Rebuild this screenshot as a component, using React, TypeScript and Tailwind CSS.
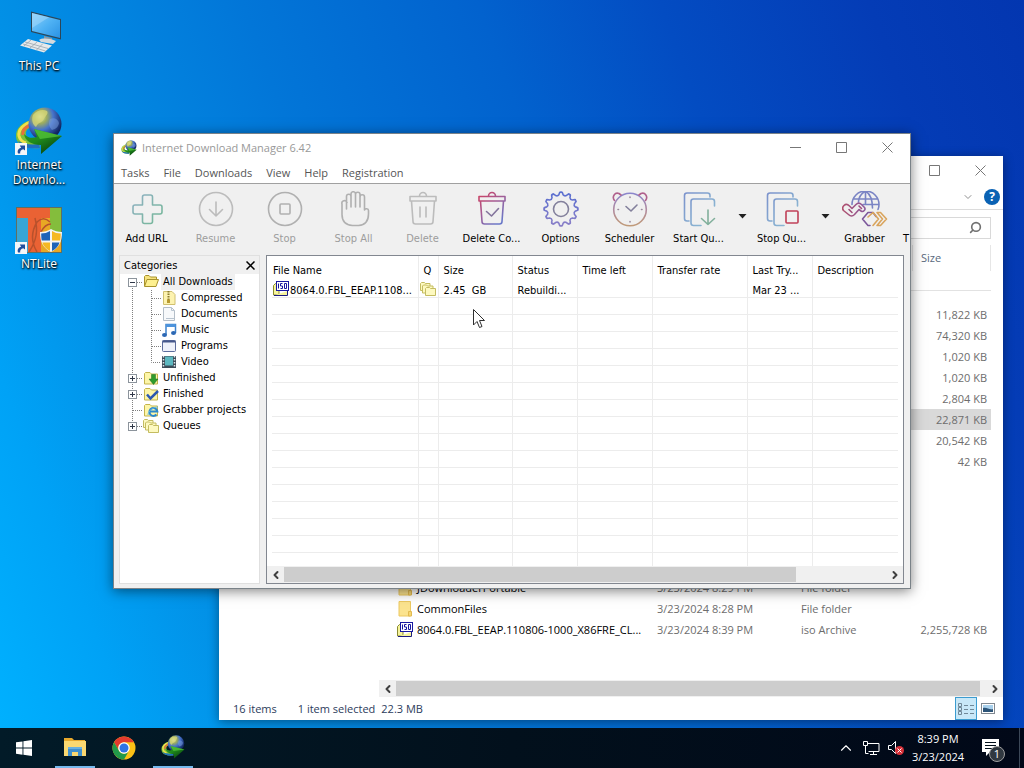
import type { ReactNode } from 'react';
import { ChevronDown, ChevronLeft, ChevronRight, ChevronUp, Search } from 'lucide-react';

type ToolItem = { label: string; icon: ReactNode; disabled?: boolean; menu?: boolean };
type TreeItem = { label: string; icon: ReactNode; child?: boolean; last?: boolean; toggle?: 'plus' | 'minus'; first?: boolean };
type FileRow = { name?: string; icon?: ReactNode; date?: string; type?: string; size?: string; selected?: boolean };

/* ---------- logos ---------- */

function SharedGradients() {
  return (
    <svg className="absolute h-0 w-0" aria-hidden="true">
      <defs>
        <radialGradient id="globe" cx="0.35" cy="0.28" r="0.8">
          <stop offset="0" stopColor="#e3ecc0" />
          <stop offset="0.25" stopColor="#9fae5c" />
          <stop offset="0.5" stopColor="#4673cc" />
          <stop offset="0.85" stopColor="#152b68" />
          <stop offset="1" stopColor="#0c1a48" />
        </radialGradient>
        <linearGradient id="arrow" x1="0" y1="0" x2="0.8" y2="1">
          <stop offset="0" stopColor="#2f9a22" />
          <stop offset="0.45" stopColor="#1f8a1c" />
          <stop offset="1" stopColor="#063a0c" />
        </linearGradient>
        <linearGradient id="plus" x1="0" y1="0" x2="1" y2="1">
          <stop offset="0" stopColor="#8fb0c4" />
          <stop offset="1" stopColor="#74b896" />
        </linearGradient>
        <linearGradient id="bin" x1="0" y1="0" x2="0.7" y2="1">
          <stop offset="0" stopColor="#cf4060" />
          <stop offset="0.45" stopColor="#a85a90" />
          <stop offset="1" stopColor="#6a78c8" />
        </linearGradient>
        <linearGradient id="gear" x1="0" y1="0" x2="0" y2="1">
          <stop offset="0" stopColor="#5a6fd0" />
          <stop offset="1" stopColor="#8b80c8" />
        </linearGradient>
        <linearGradient id="clock" x1="0" y1="0" x2="0" y2="1">
          <stop offset="0" stopColor="#8a86cc" />
          <stop offset="0.5" stopColor="#b08aa0" />
          <stop offset="1" stopColor="#c09a78" />
        </linearGradient>
        <linearGradient id="pages" x1="0" y1="0" x2="1" y2="1">
          <stop offset="0" stopColor="#7b92cc" />
          <stop offset="1" stopColor="#8fc0d4" />
        </linearGradient>
        <linearGradient id="links" x1="0" y1="0" x2="1" y2="0">
          <stop offset="0" stopColor="#b0506e" />
          <stop offset="1" stopColor="#8c5a9c" />
        </linearGradient>
        <linearGradient id="screen" x1="0" y1="0" x2="1" y2="1">
          <stop offset="0" stopColor="#8fd0fa" />
          <stop offset="0.5" stopColor="#4fb2f4" />
          <stop offset="1" stopColor="#2a92e4" />
        </linearGradient>
      </defs>
    </svg>
  );
}

function IdmLogo({ className }: { className: string }) {
  return (
    <svg viewBox="0 0 48 48" className={className} aria-hidden="true">
      <path d="M20 12C8 14 0 21 1 30c1 9 10 12 24 11l-2-9c-8 1-11-1-12-4-1-5 3-8 9-9z" fill="#7cc03a" />
      <path d="M19 14C8 17 3 23 4 29c1 4 4 6 7 7" fill="none" stroke="#f0e04c" strokeWidth="3" />
      <path d="M19 17C11 19 7 23 8 28" fill="none" stroke="#e8703a" strokeWidth="3" />
      <path d="M3 34c4 7 12 8 22 7l-1-4c-9 1-16 0-21-3z" fill="#1f6fc0" />
      <circle cx="30" cy="17" r="16.5" fill="url(#globe)" />
      <path d="M18 8c4-5 10-6 14-4 2 3-2 5-3 8-2 4-6 3-8 8-3-2-5-7-3-12z" fill="#d8d878" opacity="0.75" />
      <path d="M35 12c4-2 8 0 9 4-1 5-4 6-7 7-3-3-4-7-2-11z" fill="#7aa0e0" opacity="0.5" />
      <path d="M19 22l28 7-21 18 0-9C17 38 10 34 9 27c5 5 9 4 13 3z" fill="url(#arrow)" />
      <path d="M19 22l28 7-22 3z" fill="#58c83c" opacity="0.7" />
    </svg>
  );
}

function ShortcutArrow() {
  return (
    <svg viewBox="0 0 12 12" className="absolute bottom-0 left-0 h-3 w-3" aria-hidden="true">
      <rect width="12" height="12" fill="#f4f6f8" />
      <path d="M3 10.500C2 7.500 3.500 5.200 6.200 4.800L4.800 2.500H10v5L8.300 6.300C6 6.800 4.800 8.300 5.200 10.500z" fill="#1f4f9e" />
    </svg>
  );
}

function ThisPcIcon() {
  return (
    <svg viewBox="0 0 48 48" className="h-12 w-12" aria-hidden="true">
      <path d="M16 3.500l30 7.500v20.500l-30-7.500z" fill="#2c4658" />
      <path d="M17 5l28 7v18l-28-7z" fill="url(#screen)" />
      <path d="M17 5l17 4.300L17 20z" fill="#a8dcfb" opacity="0.5" />
      <path d="M29 28l8 2v4l-8-2z" fill="#8d9aa4" />
      <path d="M24 32c3-2 9-2 17 1l-3 3-12-2z" fill="#d4dade" />
      <path d="M13 31l24 6.500-8 7L5 37.500z" fill="#e6eaec" />
      <path d="M10 34l23 6.500M8 36l22.500 7M16 32l-7 6M22 34l-7 6M28 35.500l-7 7" stroke="#9aa6ae" strokeWidth="0.8" />
    </svg>
  );
}

function NtLiteIcon() {
  return (
    <svg viewBox="0 0 48 48" className="h-12 w-12" aria-hidden="true">
      <rect x="1" y="1" width="46" height="46" fill="#5f6f62" />
      <rect x="2" y="2" width="44" height="44" fill="#e8a824" />
      <rect x="2" y="12" width="12" height="34" fill="#38a5d4" />
      <rect x="35" y="2" width="11" height="26" fill="#84bd3c" />
      <path d="M2 2h33v10H26v34H13V12H2z" fill="#ea6234" />
      <path d="M14 46c8-12 9-22 6-34M22 46c-6-10-6-20 0-30 5-5 9-4 13 0M26 26c3-6 6-8 10-8" fill="none" stroke="#b8512c" strokeWidth="1.500" />
      <path d="M36 23c3 2 7 3 11 3 0 10-3 16-11 20-8-4-11-10-11-20 4 0 8-1 11-3z" fill="#f4f4f4" />
      <path d="M35 25v9.500h-8.300c-.3-2-.5-4-.5-7 3 0 6.300-.8 8.800-2.500zM37 36.500h7.500c-1 4-4 6.500-7.500 8.500z" fill="#1d63b8" />
      <path d="M37 25c2.500 1.700 5.500 2.500 8.800 2.500 0 2.500-.2 5-.6 7H37zM27.300 36.500H35v8.500c-3.500-2-6.500-4.500-7.700-8.500z" fill="#f5b822" />
    </svg>
  );
}

function ChromeIcon() {
  return (
    <svg viewBox="0 0 48 48" className="h-6 w-6" aria-hidden="true">
      <circle cx="24" cy="24" r="23" fill="#fbc116" />
      <path d="M4.100 12.500A23 23 0 0 1 43.900 12.500H24A11.500 11.500 0 0 0 14 29.800z" fill="#e33b2e" />
      <path d="M4.100 12.500A23 23 0 0 0 24 47l10-17.300A11.500 11.500 0 0 1 14 29.700z" fill="#21994a" />
      <circle cx="24" cy="24" r="11.500" fill="#fff" />
      <circle cx="24" cy="24" r="9" fill="#2f74e4" />
    </svg>
  );
}

function ExplorerIcon() {
  return (
    <svg viewBox="0 0 24 24" className="h-6 w-6" aria-hidden="true">
      <path d="M1 3h8l2 2h11v15H1z" fill="#e8a92c" />
      <path d="M1 6h22v15H1z" fill="#fbd870" />
      <path d="M5 13h14v8h-4v-4H9v4H5z" fill="#3f8fce" />
      <path d="M5 12h14v2H5z" fill="#68b0e0" />
    </svg>
  );
}

/* ---------- toolbar drawings ---------- */

function ToolSvg({ children, wide }: { children: ReactNode; wide?: boolean }) {
  return (
    <svg
      viewBox={wide ? '0 0 46 36' : '0 0 36 36'}
      className={wide ? 'h-9 w-[46px]' : 'h-9 w-9'}
      fill="none"
      strokeWidth="1.6"
      strokeLinecap="round"
      strokeLinejoin="round"
      aria-hidden="true"
    >
      {children}
    </svg>
  );
}

function gearPath(teeth: number) {
  const pts: string[] = [];
  const step = (Math.PI * 2) / teeth;
  const at = (r: number, a: number) => `${(18 + r * Math.sin(a)).toFixed(2)} ${(18 - r * Math.cos(a)).toFixed(2)}`;
  for (let i = 0; i < teeth; i++) {
    const a = i * step;
    if (i === 0) pts.push(`M${at(14.4, a - step * 0.28)}`);
    pts.push(`Q${at(18.2, a - step * 0.12)} ${at(16.6, a)}`);
    pts.push(`Q${at(18.2, a + step * 0.12)} ${at(14.4, a + step * 0.28)}`);
    pts.push(`Q${at(13, a + step * 0.5)} ${at(14.4, a + step * 0.72)}`);
  }
  return pts.join('') + 'Z';
}

const binShape = 'M5 5.500h26v4.500H5zM6.500 10l1.500 20.500a2.500 2.500 0 0 0 2.500 2.500h15a2.500 2.500 0 0 0 2.500-2.500L29.500 10M14.500 5a3.500 3.500 0 0 1 7 0';
const pagesShape = 'M8 30H6a2.500 2.500 0 0 1-2.500-2.500V4.500A2.500 2.500 0 0 1 6 2h20.500A2.500 2.500 0 0 1 29 4.500V6M20 34.500h-7.500A2.500 2.500 0 0 1 10 32V10.500A2.500 2.500 0 0 1 12.500 8h18.500a2.500 2.500 0 0 1 2.500 2.500V15';

const tools: ToolItem[] = [
  {
    label: 'Add URL',
    icon: (
      <ToolSvg>
        <path d="M15.500 4h6a2 2 0 0 1 2 2v8h7.500a2 2 0 0 1 2 2v5a2 2 0 0 1-2 2h-7.500v7.500a2 2 0 0 1-2 2h-6a2 2 0 0 1-2-2V23H6a2 2 0 0 1-2-2v-5a2 2 0 0 1 2-2h7.500V6a2 2 0 0 1 2-2z" stroke="url(#plus)" />
      </ToolSvg>
    ),
  },
  {
    label: 'Resume',
    disabled: true,
    icon: (
      <ToolSvg>
        <circle cx="18" cy="18" r="16.500" stroke="#bcbcbc" />
        <path d="M18 11v14M11.500 18.500L18 25l6.500-6.500" stroke="#bcbcbc" />
      </ToolSvg>
    ),
  },
  {
    label: 'Stop',
    disabled: true,
    icon: (
      <ToolSvg>
        <circle cx="18" cy="18" r="16.500" stroke="#b0b0b0" />
        <rect x="13" y="13" width="10" height="10" rx="1" stroke="#b0b0b0" />
      </ToolSvg>
    ),
  },
  {
    label: 'Stop All',
    disabled: true,
    icon: (
      <ToolSvg>
        <path
          d="M10.500 18V5.500a2.200 2.200 0 0 1 4.500 0V16M15 8V3a2.200 2.200 0 0 1 4.500 0v13M19.500 8V3.500a2.200 2.200 0 0 1 4.500 0V16M24 8V6a2.200 2.200 0 0 1 4.500 0v13c.5-2 4-1.500 4 .5V23c0 7-4 11-10 11.500h-6c-6-.5-10.500-4-10.500-11V13a2.500 2.500 0 0 1 5-1.500"
          stroke="#b0b0b0"
        />
      </ToolSvg>
    ),
  },
  {
    label: 'Delete',
    disabled: true,
    icon: (
      <ToolSvg>
        <path d={binShape} stroke="#bcbcbc" />
        <path d="M15 16v10M21 16v10" stroke="#bcbcbc" />
      </ToolSvg>
    ),
  },
  {
    label: 'Delete Co...',
    icon: (
      <ToolSvg>
        <path d={binShape} stroke="url(#bin)" />
        <path d="M12.500 20.500l5 4.500 7-7.500" stroke="#83749c" />
      </ToolSvg>
    ),
  },
  {
    label: 'Options',
    icon: (
      <ToolSvg>
        <path d={gearPath(12)} stroke="url(#gear)" />
        <circle cx="18" cy="18" r="7.500" stroke="#83809c" />
      </ToolSvg>
    ),
  },
  {
    label: 'Scheduler',
    icon: (
      <ToolSvg>
        <circle cx="18" cy="18.500" r="16.300" stroke="url(#clock)" />
        <path d="M2.500 9.500C-.5 5.500 3 1 7 2.500L9 4M33.500 9.500C36.500 5.500 33 1 29 2.500L27 4" stroke="#b0608c" />
        <path d="M14 15.500l5 4.500 6-6" stroke="#83809c" />
        <path d="M18 6v.5M18 30.500v.5M6 18.500h.5M29.500 18.500h.5" stroke="#9a8a9c" />
      </ToolSvg>
    ),
  },
  {
    label: 'Start Qu...',
    menu: true,
    icon: (
      <ToolSvg>
        <path d={pagesShape} stroke="url(#pages)" />
        <path d="M27 19v14.500M20.500 27.500l6.500 6 6.500-6" stroke="#82b09c" />
      </ToolSvg>
    ),
  },
  {
    label: 'Stop Qu...',
    menu: true,
    icon: (
      <ToolSvg>
        <path d={pagesShape} stroke="url(#pages)" />
        <rect x="22" y="20" width="12" height="12" rx="1" stroke="#c04058" />
      </ToolSvg>
    ),
  },
  {
    label: 'Grabber',
    icon: (
      <ToolSvg wide>
        <path d="M10 13.500a13.500 13.500 0 0 1 27 0c0 2-.5 4-1 5M12 8h23M21 13.500h16M23.500 0v13M23.500 0c-5 3-7 7-7 11M23.500 0c5 3 7 9 7 17" stroke="#7a84c4" />
        <path d="M2 14.500c2-2 4-1 5.500.5l2.500 2.500 4-4c2-2 4-1.500 5.500 0l3 3c1.500 2-1 5-3.500 3.500l-2-1.500-4.500 5c-2 2-4 2-6 0L1.500 19.500c-1.500-2-1-3.500.5-5z" stroke="url(#links)" />
        <path d="M17 15l2.500 2.500M7 18.500l3 3" stroke="#a0507c" />
        <path d="M28 34.500h-2L20.500 28l5.500-6.500h5l3 4" stroke="#7c589c" />
        <path d="M26 26l5-4.500 5.500 6.500-5.500 6.500M35 21.500h3.500l6 6.500-6 6.500H35l5.500-6.500z" stroke="#d9a45c" />
      </ToolSvg>
    ),
  },
];

/* ---------- 16px drawings ---------- */

function Small({ children }: { children: ReactNode }) {
  return (
    <svg viewBox="0 0 16 16" className="h-4 w-4 shrink-0" aria-hidden="true">
      {children}
    </svg>
  );
}

const folderBack = <path d="M1.500 14V3.500l1-1H7l1.500 1.500h6V14z" fill="#fdf6a8" stroke="#c4b44c" />;

const queueIcon = (
  <Small>
    <g fill="#fdf9c0" stroke="#c4bc60">
      <path d="M.5 9.500v-7l1-1h3l1 1h4.500v7z" />
      <path d="M2.500 12V5l1-1h3l1 1H13v7z" />
      <path d="M5.500 14.500v-7l1-1h3l1 1h5v7z" />
    </g>
  </Small>
);

const isoIcon = (
  <Small>
    <path d="M.5 14V4.500l2-2H6v11.500z" fill="#f6f49c" stroke="#8a8a30" />
    <path d="M1 14.500h13.500V10" fill="#f6f49c" stroke="#1c1c80" />
    <rect x="3.500" y=".5" width="12" height="9" fill="#fff" stroke="#1818a0" />
    <path d="M5.500 2.500v5M9.500 2.500h-2v2.500h2v2.500h-2M11.500 2.500h2v5h-2z" fill="none" stroke="#1818a0" />
  </Small>
);

const fileFolder = (
  <Small>
    <path d="M2 .5h11.500V15H2z" fill="#fbe38e" stroke="#ecc860" />
    <path d="M11.500 10.500h3V15h-3z" fill="#f6d774" stroke="#e2ba50" />
  </Small>
);

const tree: TreeItem[] = [
  {
    label: 'All Downloads',
    toggle: 'minus',
    first: true,
    icon: (
      <Small>
        <path d="M1.500 12V2.500l1-1H6l1.500 1.500h6V5" fill="#f6e27c" stroke="#a8922c" />
        <path d="M1.500 12.500l2.500-7h11.500l-2.500 7z" fill="#fdf090" stroke="#a8922c" />
      </Small>
    ),
  },
  {
    label: 'Compressed',
    child: true,
    icon: (
      <Small>
        <path d="M2.500 1.500h8.500l3 3v10H2.500z" fill="#fdf3b0" stroke="#d0c070" />
        <path d="M7.500 1v9" stroke="#8a7a30" strokeWidth="2" strokeDasharray="1.500 1" />
        <rect x="6" y="9.500" width="3" height="3.500" fill="#b89a30" />
      </Small>
    ),
  },
  {
    label: 'Documents',
    child: true,
    icon: (
      <Small>
        <path d="M2.500 1.500h8l3 3v10h-11z" fill="#f7f9fb" stroke="#b4bec8" />
        <path d="M10.500 1.500v3h3M5 12.500h8" fill="none" stroke="#b8c4d0" />
      </Small>
    ),
  },
  {
    label: 'Music',
    child: true,
    icon: (
      <Small>
        <path d="M5 13V2.500h9.500V11" fill="none" stroke="#3f82cc" strokeWidth="1.500" />
        <path d="M5 2h9.500v3H5z" fill="#4c93dc" />
        <ellipse cx="3.500" cy="13" rx="2.500" ry="2" fill="#2c68b4" />
        <ellipse cx="12.500" cy="11" rx="2.500" ry="2" fill="#2c68b4" />
      </Small>
    ),
  },
  {
    label: 'Programs',
    child: true,
    icon: (
      <Small>
        <rect x="1.500" y="2.500" width="13" height="11" rx="1" fill="#eef1fa" stroke="#5c6c9c" />
        <path d="M1.500 3.500h13" stroke="#46588c" strokeWidth="2" />
      </Small>
    ),
  },
  {
    label: 'Video',
    child: true,
    last: true,
    icon: (
      <Small>
        <rect x="1" y="2" width="14" height="12" fill="#3c4c58" />
        <rect x="4" y="2.500" width="8" height="9" fill="#5cb8c0" />
        <path d="M2.500 2v12M13.500 2v12" stroke="#dfe8ec" strokeWidth="1.500" strokeDasharray="1.500 1.500" />
      </Small>
    ),
  },
  {
    label: 'Unfinished',
    toggle: 'plus',
    icon: (
      <Small>
        {folderBack}
        <path d="M8.500 4.500h4V9H15l-4.500 5.500L6 9h2.500z" fill="#2f9c2c" stroke="#1c6c1c" strokeWidth="0.500" />
      </Small>
    ),
  },
  {
    label: 'Finished',
    toggle: 'plus',
    icon: (
      <Small>
        {folderBack}
        <path d="M4 8.500l3.500 4L15 5" fill="none" stroke="#2c58b0" strokeWidth="2.500" />
      </Small>
    ),
  },
  {
    label: 'Grabber projects',
    icon: (
      <Small>
        {folderBack}
        <path d="M13.500 12.500a4 4 0 1 1 .9-3H7" fill="none" stroke="#2c88cc" strokeWidth="2" />
        <path d="M5 13c0-4 5-8 10-8" fill="none" stroke="#68b8e4" />
      </Small>
    ),
  },
  { label: 'Queues', toggle: 'plus', icon: queueIcon },
];

/* dotted connector lines and the expand box in front of a tree row */
function Branch({ item, end }: { item: TreeItem; end: boolean }) {
  const width = item.child ? 41 : 23;
  return (
    <svg width={width} height="16" viewBox={`0 0 ${width} 16`} className="shrink-0" fill="none" aria-hidden="true">
      <g stroke="#808080" strokeDasharray="1 1">
        <path d={item.first ? 'M12.500 8v8' : end ? 'M12.500 0v8' : 'M12.500 0v16'} />
        {item.child ? <path d={item.last ? 'M31.500 0v8.500H41' : 'M31.500 0v16M32 8.500h9'} /> : <path d="M13 8.500h10" />}
      </g>
      {item.toggle && (
        <>
          <rect x="8.500" y="4.500" width="8" height="8" fill="#fff" stroke="#8c949c" />
          <path d={item.toggle === 'plus' ? 'M10 8.500h5M12.500 6v5' : 'M10 8.500h5'} stroke="#303848" />
        </>
      )}
    </svg>
  );
}

/* ---------- window parts ---------- */

function WindowButtons() {
  return (
    <div className="flex h-full text-[#777]">
      <button aria-label="Minimize" className="flex w-[46px] items-center justify-center">
        <svg width="11" height="11" fill="none" stroke="currentColor"><path d="M0 5.500h11" /></svg>
      </button>
      <button aria-label="Maximize" className="flex w-[46px] items-center justify-center">
        <svg width="11" height="11" fill="none" stroke="currentColor"><path d="M.5.500h10v10H.5z" /></svg>
      </button>
      <button aria-label="Close" className="flex w-[46px] items-center justify-center">
        <svg width="11" height="11" fill="none" stroke="currentColor"><path d="M.5.500l10 10M10.500.500l-10 10" /></svg>
      </button>
    </div>
  );
}

function ScrollBar({ thumb }: { thumb: string }) {
  return (
    <div className="flex h-[17px] shrink-0 bg-[#f0f0f0] text-[#404040]">
      <button aria-label="Scroll left" className="flex w-[17px] items-center justify-center">
        <ChevronLeft size={12} strokeWidth={4} />
      </button>
      <div className="flex-1 py-px">
        <div className="h-full bg-[#cdcdcd]" style={{ width: thumb }} />
      </div>
      <button aria-label="Scroll right" className="flex w-[17px] items-center justify-center">
        <ChevronRight size={12} strokeWidth={4} />
      </button>
    </div>
  );
}

const files: FileRow[] = [
  { size: '11,822 KB' },
  { size: '74,320 KB' },
  { size: '1,020 KB' },
  { size: '1,020 KB' },
  { size: '2,804 KB' },
  { size: '22,871 KB', selected: true },
  { size: '20,542 KB' },
  { size: '42 KB' },
  {}, {}, {}, {}, {},
  { name: 'JDownloaderPortable', icon: fileFolder, date: '3/23/2024 8:29 PM', type: 'File folder' },
  { name: 'CommonFiles', icon: fileFolder, date: '3/23/2024 8:28 PM', type: 'File folder' },
  { name: '8064.0.FBL_EEAP.110806-1000_X86FRE_CL...', icon: isoIcon, date: '3/23/2024 8:39 PM', type: 'iso Archive', size: '2,255,728 KB' },
];

function ExplorerWindow() {
  return (
    <section className="absolute top-[156px] right-[21px] bottom-12 left-[219px] flex flex-col bg-white text-[11px] leading-4 text-[#6d6d6d] shadow-[0_2px_10px_rgba(0,0,0,0.4)]">
      <div className="flex h-7 justify-end">
        <WindowButtons />
      </div>
      <div className="flex h-[26px] items-center justify-end gap-2.5 border-b border-[#dcdcdc] pr-[3px]">
        <button aria-label="Expand the ribbon">
          <ChevronDown size={12} className="text-[#909090]" />
        </button>
        <button aria-label="Help" className="h-4 w-4 rounded-full bg-[#0a62b4] text-[12px] leading-4 font-bold text-white">?</button>
      </div>
      <div className="flex h-[35px] items-center justify-end px-3">
        <div className="flex h-[22px] w-[200px] items-center border border-[#d9d9d9] pr-2">
          <input aria-label="Search" className="h-full min-w-0 flex-1 outline-none" />
          <Search size={13} strokeWidth={3} className="-scale-x-100 text-[#707070]" />
        </div>
      </div>
      <div className="flex min-h-0 flex-1">
        <nav className="w-40 shrink-0" />
        <div className="flex min-w-0 flex-1 flex-col">
          <div className="min-h-0 flex-1 overflow-hidden pr-3">
            <table className="w-full table-fixed border-collapse">
              <colgroup>
                <col />
                <col className="w-36" />
                <col className="w-[120px]" />
                <col className="w-[79px]" />
              </colgroup>
              <thead>
                <tr className="h-[45px] border-b border-[#e2e2e2] align-top">
                  <th colSpan={3} />
                  <th className="text-left font-normal text-[#58687c]">
                    <div className="border-x border-[#e6e6e6] px-2 py-[5px]">Size</div>
                  </th>
                </tr>
                <tr className="h-[14px]" />
              </thead>
              <tbody>
                {files.map((f, i) => (
                  <tr key={i} className={f.selected ? 'h-[21px] bg-[#d9d9d9]' : 'h-[21px]'}>
                    <td className="pl-[18px] text-black">
                      {f.name && (
                        <div className="flex items-center gap-1 whitespace-nowrap">
                          {f.icon}
                          <span>{f.name}</span>
                        </div>
                      )}
                    </td>
                    <td className="pl-[9px] whitespace-nowrap">{f.date}</td>
                    <td className="pl-[9px]">{f.type}</td>
                    <td className="pr-1 text-right whitespace-nowrap">{f.size}</td>
                  </tr>
                ))}
              </tbody>
            </table>
          </div>
          <ScrollBar thumb="99%" />
        </div>
      </div>
      <footer className="flex h-[23px] items-center text-[#2c3c5c]">
        <span className="pl-3.5">16 items</span>
        <span className="pl-[21px]">1 item selected</span>
        <span className="pl-1.5">22.3 MB</span>
        <button aria-label="Details view" className="ml-auto flex h-[23px] w-[22px] items-center justify-center border border-[#3c9cd0] bg-[#c8e8f8]">
          <svg width="16" height="14" fill="none" stroke="#708898">
            <path d="M.5 1.500h3v3h-3zM.5 5.500h3v3h-3zM.5 9.500h3v3h-3z" />
            <path d="M6 3.500h4M12 3.500h4M6 7.500h4M12 7.500h4M6 11.500h4M12 11.500h4" />
          </svg>
        </button>
        <button aria-label="Large icons view" className="mr-2 ml-1">
          <svg width="14" height="11" fill="none">
            <rect x=".5" y=".5" width="13" height="10" fill="#fff" stroke="#808890" />
            <path d="M2 2h10v4H2z" fill="#a8d0ec" />
            <path d="M2 5c4-1 6 2 10 1v3H2z" fill="#2c5478" />
          </svg>
        </button>
      </footer>
    </section>
  );
}

function Toolbar() {
  return (
    <div className="-ml-0.5 flex h-[71px] overflow-hidden text-[11px] leading-4">
      {tools.map((tool) => (
        <div key={tool.label} className="flex shrink-0">
          <button
            disabled={tool.disabled}
            className={`flex w-[69px] flex-col items-center gap-1 pt-[7px] whitespace-nowrap ${tool.disabled ? 'text-[#9d9d9d]' : 'text-black'}`}
          >
            {tool.icon}
            <span>{tool.label}</span>
          </button>
          {tool.menu && (
            <button aria-label={`${tool.label} menu`} className="flex w-3.5 items-start justify-end pt-[30px]">
              <svg width="9" height="5"><path d="M.5 0h8l-4 4.500z" fill="#202020" /></svg>
            </button>
          )}
        </div>
      ))}
      <button aria-label="Tell a Friend" className="shrink-0 self-start pt-[47px] pl-1">T</button>
    </div>
  );
}

const columns = [
  { label: 'File Name', width: 'w-[146px]' },
  { label: 'Q', width: 'w-5' },
  { label: 'Size', width: 'w-[74px]' },
  { label: 'Status', width: 'w-[65px]' },
  { label: 'Time left', width: 'w-[75px]' },
  { label: 'Transfer rate', width: 'w-[95px]' },
  { label: 'Last Try...', width: 'w-[65px]' },
  { label: 'Description', width: '' },
];

const download: ReactNode[] = [
  <div className="flex items-end gap-px">{isoIcon}<span>8064.0.FBL_EEAP.1108...</span></div>,
  queueIcon,
  '2.45  GB',
  'Rebuildi...',
  '',
  '',
  'Mar 23 ...',
  '',
];

function DownloadList() {
  const blank = Array.from({ length: 16 });
  return (
    <div className="flex min-w-0 flex-1 flex-col border border-[#828790] bg-white">
      <div className="min-h-0 flex-1 overflow-hidden px-[5px] leading-[13px]">
        <table className="w-full table-fixed border-collapse">
          <colgroup>
            {columns.map((c) => (
              <col key={c.label} className={c.width} />
            ))}
          </colgroup>
          <thead>
            <tr className="h-6">
              {columns.map((c, i) => (
                <th key={c.label} className={`border-r border-[#ececec] pt-1 text-left font-normal whitespace-nowrap last:border-r-0 ${i === 0 ? 'pl-px' : 'pl-[5px]'}`}>
                  {c.label}
                </th>
              ))}
            </tr>
          </thead>
          <tbody>
            <tr className="h-[17px] border-b border-[#ececec] align-bottom">
              {download.map((cell, i) => (
                <td key={i} className={`border-r border-[#ececec] p-0 whitespace-pre last:border-r-0 ${i > 1 ? 'pl-[5px]' : 'pl-px'}`}>
                  {cell}
                </td>
              ))}
            </tr>
            {blank.map((_, r) => (
              <tr key={r} className="h-[17px] border-b border-[#ececec]">
                {columns.map((c) => (
                  <td key={c.label} className="border-r border-[#ececec] p-0 last:border-r-0" />
                ))}
              </tr>
            ))}
          </tbody>
        </table>
      </div>
      <ScrollBar thumb="85%" />
    </div>
  );
}

function IdmWindow() {
  return (
    <section className="absolute inset-x-[113px] top-[133px] bottom-[179px] flex flex-col overflow-hidden border border-[#7a8288] bg-[#f0f0f0] font-['DejaVu_Sans_Condensed','Noto_Sans',sans-serif] text-[11px] text-black shadow-[0_2px_12px_rgba(0,0,0,0.5)]">
      <header className="bg-white font-['Open_Sans','Noto_Sans',sans-serif] leading-4">
        <div className="flex h-[27px] items-center">
          <IdmLogo className="ml-[7px] h-4 w-4" />
          <h1 className="ml-[5px] flex-1 text-[#999]">Internet Download Manager 6.42</h1>
          <WindowButtons />
        </div>
        <nav className="flex h-[22px] items-center pt-0.5 text-[#555]">
          {['Tasks', 'File', 'Downloads', 'View', 'Help', 'Registration'].map((m) => (
            <button key={m} className="px-[7px]">{m}</button>
          ))}
        </nav>
      </header>
      <div className="border-t border-[#a0a0a0]">
        <Toolbar />
      </div>
      <div className="flex min-h-0 flex-1 gap-1.5 pr-1.5 pb-1 pl-[5px]">
        <aside className="flex w-[141px] shrink-0 flex-col border border-[#e0e0e0] bg-white leading-4">
          <div className="flex h-[18px] items-center justify-between bg-[#f0f0f0] pt-px pr-1 pl-1">
            <span>Categories</span>
            <button aria-label="Close categories">
              <svg width="9" height="9" stroke="#000" strokeWidth="1.500"><path d="M.5.500l8 8M8.500.500l-8 8" /></svg>
            </button>
          </div>
          <ul>
            {tree.map((item, i) => (
              <li key={item.label} className="flex h-4 items-center">
                <Branch item={item} end={i === tree.length - 1} />
                {item.icon}
                <span className={item.first ? 'ml-0.5 bg-[#f0f0f0] px-0.5 whitespace-nowrap' : 'ml-1 whitespace-nowrap'}>{item.label}</span>
              </li>
            ))}
          </ul>
        </aside>
        <DownloadList />
      </div>
    </section>
  );
}

function DesktopIcon({ lines, icon, shortcut }: { lines: string[]; icon: ReactNode; shortcut?: boolean }) {
  return (
    <button className="flex h-[99px] w-[78px] flex-col items-center gap-0.5 text-[12px] leading-[15px] text-white [text-shadow:0_1px_2px_#000,1px_1px_2px_#000]">
      <span className="relative">
        {icon}
        {shortcut && <ShortcutArrow />}
      </span>
      <span>
        {lines.map((l) => (
          <span key={l} className="block">{l}</span>
        ))}
      </span>
    </button>
  );
}

function Taskbar() {
  return (
    <footer className="absolute inset-x-0 bottom-0 flex h-10 bg-linear-to-r from-[#021b28] via-[#02101c] to-[#010818] text-white">
      <div className="flex gap-px">
        <button aria-label="Start" className="flex w-12 items-center justify-center">
          <svg viewBox="0 0 16 16" className="h-4 w-4" fill="#fff">
            <path d="M0 2.300l6.500-.9v6.200H0zM7.400 1.200L16 0v7.600H7.400zM0 8.500h6.500v6.200L0 13.800zM7.400 8.500H16V16l-8.600-1.200z" />
          </svg>
        </button>
        <button aria-label="File Explorer" className="flex w-[52px] flex-col items-center">
          <span className="flex flex-1 items-center"><ExplorerIcon /></span>
          <span className="h-0.5 w-10 bg-[#76b9ed]" />
        </button>
        <button aria-label="Google Chrome" className="flex w-11 items-center justify-center">
          <ChromeIcon />
        </button>
        <button aria-label="Internet Download Manager" className="flex w-[52px] flex-col items-center">
          <span className="flex flex-1 items-center"><IdmLogo className="h-6 w-6" /></span>
          <span className="h-0.5 w-10 bg-[#76b9ed]" />
        </button>
      </div>
      <div className="ml-auto flex items-center text-[11px] leading-[18px]">
        <button aria-label="Show hidden icons" className="mr-2">
          <ChevronUp size={18} strokeWidth={1.5} />
        </button>
        <svg width="17" height="16" fill="none" stroke="#fff" className="mr-2" aria-hidden="true">
          <path d="M5 3.500h11v8H5.500M.5 1.500h4v4h-4zM2.500 5.500v8h3M10.500 12v2M7 14.500h7" />
        </svg>
        <svg width="17" height="16" fill="none" className="mr-1.5" aria-hidden="true">
          <path d="M.5 5.500h3l4-4v12l-4-4h-3z" stroke="#fff" />
          <circle cx="11.500" cy="10.500" r="4.500" fill="#d83038" />
          <path d="M9.500 8.500l4 4M13.500 8.500l-4 4" stroke="#fff" />
        </svg>
        <div className="w-[54px] text-center whitespace-nowrap">
          <div>8:39 PM</div>
          <div>3/23/2024</div>
        </div>
        <button aria-label="Notifications" className="relative ml-4 h-6 w-6">
          <svg viewBox="0 0 24 24" className="h-6 w-6" aria-hidden="true">
            <path d="M1 3h17v13h-9l-4 4v-4H1z" fill="#fff" />
            <path d="M4 6.500h11M4 9.500h11M4 12.500h7" stroke="#02101c" />
          </svg>
          <span className="absolute top-[10px] left-2 h-4 w-4 rounded-full border border-[#a0a0a0] bg-[#303840] text-center text-[11px] leading-[14px]">1</span>
        </button>
        <span className="mr-1 ml-3.5 h-10 w-px bg-[#3c4858]" />
      </div>
    </footer>
  );
}

export default function App() {
  return (
    <main className="relative h-screen overflow-hidden bg-[linear-gradient(70deg,#00b2ff_0%,#00a2f6_11%,#0290e6_21%,#0276d8_40%,#0262ce_58%,#034cc2_72%,#043cb6_88%,#0336b0_100%)] font-['Open_Sans','Noto_Sans',sans-serif]">
      <SharedGradients />
      <div className="flex w-[78px] flex-col pt-2">
        <DesktopIcon lines={['This PC']} icon={<ThisPcIcon />} />
        <DesktopIcon lines={['Internet', 'Downlo...']} icon={<IdmLogo className="h-12 w-12" />} shortcut />
        <DesktopIcon lines={['NTLite']} icon={<NtLiteIcon />} shortcut />
      </div>
      <ExplorerWindow />
      <IdmWindow />
      <Taskbar />
      <svg width="13" height="20" className="absolute top-[309px] left-[473px]" aria-hidden="true">
        <path d="M.5.500v15.500l3.500-3.500 2.500 6 2.500-1-2.500-6h5z" fill="#fff" stroke="#303030" />
      </svg>
    </main>
  );
}
